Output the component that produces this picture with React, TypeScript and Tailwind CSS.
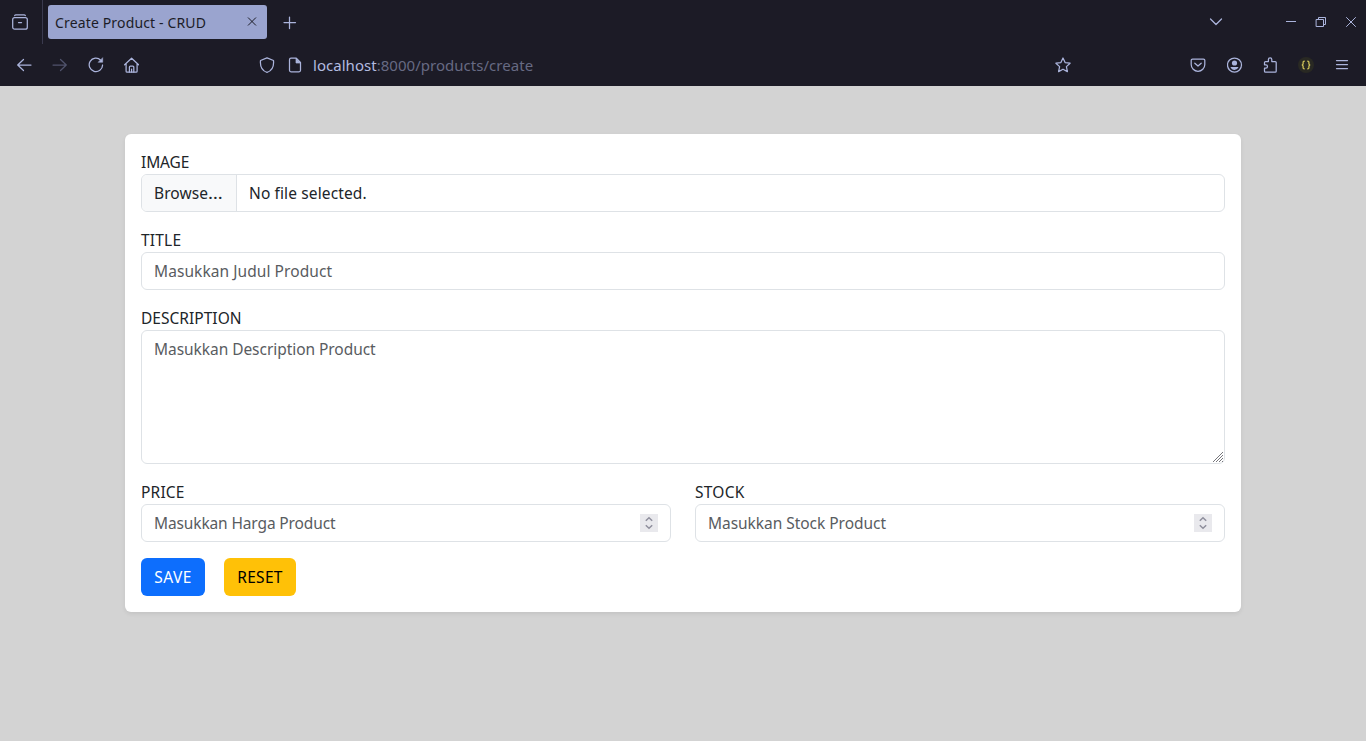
import type { ReactNode } from "react";

function Icon({ children, size = 16, className = "" }: { children: ReactNode; size?: number; className?: string }) {
  return (
    <svg
      width={size}
      height={size}
      viewBox={`0 0 ${size} ${size}`}
      fill="none"
      stroke="currentColor"
      strokeWidth="1.25"
      strokeLinecap="round"
      strokeLinejoin="round"
      className={`block shrink-0 ${className}`}
    >
      {children}
    </svg>
  );
}

function TabBar() {
  return (
    <div className="flex h-11 items-start">
      <div className="flex h-11 w-[43px] items-center border-r border-[#3a3a4e] pl-3">
        <Icon>
          <path d="M2.700 1.600Q3 .900 4 .900h8q1 0 1.300.700" />
          <rect x=".7" y="3.600" width="14.600" height="11.600" rx="2" />
          <path d="M6.500 8.500h3" />
        </Icon>
      </div>
      <div className="ml-[5px] mt-[5px] flex h-[34px] w-[219px] items-center justify-between rounded-[3px] bg-[#9aa4cf] pl-[7px] pr-[9px] text-[#1c1c27]">
        <span className="whitespace-nowrap text-[14px] tracking-[0.15px]">Create Product - CRUD</span>
        <Icon size={12}>
          <path d="M2.300 1.800l7.400 7.400M9.700 1.800L2.300 9.200" strokeWidth="1" />
        </Icon>
      </div>
      <Icon className="ml-[15px] mt-[15px]">
        <path d="M7.500 2v11.500M2 7.500h11.500" />
      </Icon>
      <div className="ml-auto flex h-11 items-center">
        <Icon className="mr-[59px]">
          <path d="M2.500 5L8 10.500 13.500 5" />
        </Icon>
        <Icon className="mr-[14px]">
          <path d="M3 7.500h10" strokeWidth="1" strokeLinecap="butt" />
        </Icon>
        <Icon className="mr-[14px]">
          <path d="M3.500 5.500h7v7h-7zM5.500 5V3.500h7v7H11" strokeWidth="1" strokeLinejoin="miter" />
        </Icon>
        <Icon className="mr-[7px]">
          <path d="M3.500 3.500l9 9M12.500 3.500l-9 9" strokeWidth="1" />
        </Icon>
      </div>
    </div>
  );
}

function Toolbar() {
  return (
    <div className="flex h-[42px] items-center pl-4 pr-4">
      <div className="flex w-[242px] gap-5">
        <Icon>
          <path d="M1.700 8H15M7.500 2.500L1.700 8l5.800 5.500" />
        </Icon>
        <Icon className="text-[#50536c]">
          <path d="M1 8h13.300M8.500 2.500L14.300 8l-5.800 5.500" />
        </Icon>
        <Icon>
          <path d="M12.700 3.200A6.700 6.700 0 1 0 14.600 8" />
          <path d="M14.700 1v4.300h-4.300z" fill="currentColor" strokeWidth=".5" />
        </Icon>
        <Icon className="-ml-px">
          <path d="M1.600 7.800l7-6.600 7 6.600M3.100 6.700v7.500q0 1 1 1h9q1 0 1-1V6.700" />
          <path d="M6.400 15V10q0-1 1-1h2.400q1 0 1 1v5M8.600 12v3" />
        </Icon>
      </div>
      <div className="flex w-[796px] items-center">
        <Icon className="ml-px">
          <path d="M8 .8l6.500 2.700c.5 5.200-1.500 10.200-6.500 11.900C3 13.700 1 8.700 1.500 3.500z" />
        </Icon>
        <Icon className="ml-3">
          <path d="M9.300 1.200H4Q2.500 1.200 2.500 2.700v10.600q0 1.500 1.500 1.500h8q1.500 0 1.500-1.500V5.500z" />
          <path d="M9 1.500V6h4.500z" fill="currentColor" strokeWidth=".7" />
        </Icon>
        <span className="ml-[10px] whitespace-nowrap text-[15px] leading-5 tracking-[0.03px] text-[#676a83]">
          <span className="text-[#b3bbe0]">localhost</span>:8000/products/create
        </span>
      </div>
      <Icon className="ml-px">
        <path d="M8 1l2.100 4.600 5 .600-3.700 3.400 1 5L8 12.200l-4.400 2.400 1-5L.9 6.200l5-.600z" />
      </Icon>
      <div className="ml-auto flex items-center gap-5">
        <Icon>
          <path d="M2.500 2h11Q14.800 2 14.800 3.300v4.200a6.800 6.800 0 0 1-13.600 0V3.300Q1.200 2 2.500 2z" />
          <path d="M4.800 6.200L8 9l3.200-2.800" />
        </Icon>
        <Icon className="ml-px">
          <circle cx="7.500" cy="8" r="7" />
          <circle cx="7.500" cy="6" r="2.600" fill="currentColor" stroke="none" />
          <path d="M3.400 10h8.200q-1.300 3-4.100 3t-4.100-3z" fill="currentColor" stroke="none" />
        </Icon>
        <Icon>
          <path d="M1.500 6.800V5.500q0-1 1-1h2.900v-2a1.700 1.700 0 0 1 3.400 0v2h3.400q1 0 1 1v8.700q0 1-1 1H2.500q-1 0-1-1v-3h1.300a1.700 1.700 0 0 0 0-3.400H1.500z" />
        </Icon>
        <span className="-ml-px flex size-4 items-center justify-center rounded-full bg-[#292923] text-[#c9bd57]">
          <Icon>
            <path d="M6.300 4.200q-1.200 0-1.200 1v1.700L4.300 8l.8 1.100v1.700q0 1 1.200 1M9.700 4.200q1.200 0 1.200 1v1.700l.8 1.100-.8 1.100v1.700q0 1-1.200 1" strokeWidth="1.300" />
          </Icon>
        </span>
        <Icon>
          <path d="M2.500 3.500h11M2.500 7.500h11M2.500 11.500h11" />
        </Icon>
      </div>
    </div>
  );
}

const field =
  "block w-full rounded-md border border-[#dee2e6] bg-white px-3 py-1.5 text-[15.5px] leading-6 text-[#212529] outline-none placeholder:text-[#595c5f] placeholder:opacity-100";

function Label({ children, className }: { children: string; className: string }) {
  return (
    <label className="block h-6 text-[15.5px] leading-6">
      <span className={className}>{children}</span>
    </label>
  );
}

function NumberField({ placeholder, className }: { placeholder: string; className: string }) {
  return (
    <div className="flex h-[38px] items-center rounded-md border border-[#dee2e6] bg-white px-3">
      <input
        inputMode="numeric"
        placeholder={placeholder}
        className={`min-w-0 flex-1 text-[15.5px] leading-6 outline-none placeholder:text-[#595c5f] placeholder:opacity-100 ${className}`}
      />
      <span className="flex size-[18px] items-center justify-center bg-[#e9e9ed] text-[#8f8f9d]">
        <svg width="18" height="18" viewBox="0 0 18 18" fill="none" stroke="currentColor" strokeWidth="1.500">
          <path d="M5.800 6.800L9 3.700l3.200 3.100M5.800 11.200L9 14.300l3.200-3.100" />
        </svg>
      </span>
    </div>
  );
}

export default function App() {
  return (
    <div className="flex h-[741px] flex-col overflow-hidden bg-[#d3d3d3] font-['Noto_Sans',sans-serif]">
      <header className="h-[86px] shrink-0 bg-[#1c1b26] text-[#abb4dc]">
        <TabBar />
        <Toolbar />
      </header>
      <main className="px-[125px] pt-12">
        <form className="flex flex-col gap-4 rounded-md bg-white p-4 text-[#212529] shadow-[0_2px_4px_rgba(0,0,0,0.075)]">
          <div>
            <Label className="tracking-[-0.1px]">IMAGE</Label>
            <div className="flex h-[38px] overflow-hidden rounded-md border border-[#dee2e6] text-[15.5px] leading-9">
              <button type="button" className="w-[95px] whitespace-nowrap border-r border-[#dee2e6] bg-[#f8f9fa] pl-3 text-left">
                <span className="tracking-[0.1px]">Browse</span>
                <span className="inline-block origin-left scale-x-[1.2]">…</span>
              </button>
              <span className="ml-3 tracking-[0.12px]">No file selected.</span>
            </div>
          </div>
          <div>
            <Label className="tracking-[0.2px]">TITLE</Label>
            <input placeholder="Masukkan Judul Product" className={`${field} h-[38px] tracking-[0.07px]`} />
          </div>
          <div>
            <Label className="tracking-[0.03px]">DESCRIPTION</Label>
            <div className="relative">
              <textarea placeholder="Masukkan Description Product" className={`${field} h-[134px] resize-none tracking-[-0.05px]`} />
              <svg width="12" height="12" viewBox="0 0 12 12" className="absolute bottom-px right-px" stroke="#77777c" strokeWidth="1">
                <path d="M1 11L11 1M4 11l7-7M7 11l4-4M10 11l1-1" />
              </svg>
            </div>
          </div>
          <div className="grid grid-cols-2 gap-6">
            <div>
              <Label className="tracking-[0.2px]">PRICE</Label>
              <NumberField placeholder="Masukkan Harga Product" className="tracking-[-0.13px]" />
            </div>
            <div>
              <Label className="tracking-[0.25px]">STOCK</Label>
              <NumberField placeholder="Masukkan Stock Product" className="tracking-[-0.04px]" />
            </div>
          </div>
          <div className="flex gap-[19px] text-[15.5px] leading-6">
            <button type="button" className="flex h-[38px] w-16 items-center justify-center rounded-md bg-[#0d6efd] text-white">
              <span className="tracking-[0.5px]">SAVE</span>
            </button>
            <button type="button" className="flex h-[38px] w-[72px] items-center justify-center rounded-md bg-[#ffc107] text-black">
              <span className="tracking-[0.3px]">RESET</span>
            </button>
          </div>
        </form>
      </main>
    </div>
  );
}
